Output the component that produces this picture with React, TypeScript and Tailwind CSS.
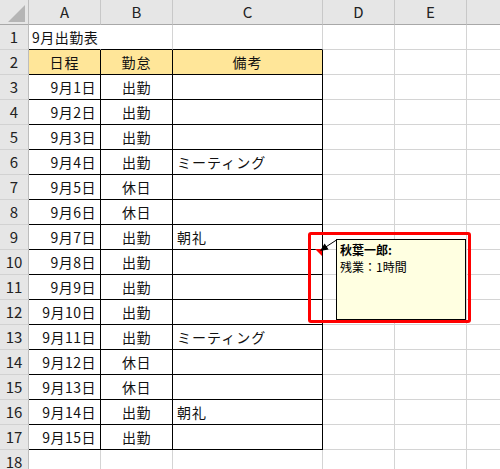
import React from "react";

const font = { fontFamily: '"Noto Sans CJK JP", "Noto Sans", sans-serif' };

type Day = { date: string; status: string; note?: string };

const days: Day[] = [
  { date: "9月1日", status: "出勤" },
  { date: "9月2日", status: "出勤" },
  { date: "9月3日", status: "出勤" },
  { date: "9月4日", status: "出勤", note: "ミーティング" },
  { date: "9月5日", status: "休日" },
  { date: "9月6日", status: "休日" },
  { date: "9月7日", status: "出勤", note: "朝礼" },
  { date: "9月8日", status: "出勤" },
  { date: "9月9日", status: "出勤" },
  { date: "9月10日", status: "出勤" },
  { date: "9月11日", status: "出勤", note: "ミーティング" },
  { date: "9月12日", status: "休日" },
  { date: "9月13日", status: "休日" },
  { date: "9月14日", status: "出勤", note: "朝礼" },
  { date: "9月15日", status: "出勤" },
];

const rowHead =
  "w-[29px] shrink-0 h-full flex items-center justify-center bg-[#e6e6e6] border-r border-b border-r-[#bdbdbd] border-b-[#d2d2d2] text-[15px] text-[#222] pt-[1px]";
const grid = "shrink-0 h-full border-r border-b border-[#d4d4d4]";
const black = "shrink-0 h-full border-r border-b border-black flex items-center text-[14px] text-[#111] pt-[1px]";

function RowNum({ n }: { n: number }) {
  return <div className={rowHead}>{n}</div>;
}

function Rest() {
  return (
    <>
      <div className={`${grid} w-[72px]`} />
      <div className={`${grid} w-[72px]`} />
      <div className="flex-1 h-full border-b border-[#d4d4d4]" />
    </>
  );
}

export default function App() {
  return (
    <div className="relative w-[500px] h-[469px] overflow-hidden bg-white" style={font}>
      {/* column headers */}
      <div className="flex h-[25px]">
        <div className="relative w-[29px] shrink-0 h-full bg-[#e6e6e6] border-r border-b border-r-[#bdbdbd] border-b-[#a8a8a8]">
          <svg className="absolute left-[8px] top-[5px]" width="17" height="17" viewBox="0 0 17 17">
            <polygon points="17,0 17,17 0,17" fill="#b5b5b5" />
          </svg>
        </div>
        {[
          ["A", "w-[72px]"],
          ["B", "w-[72px]"],
          ["C", "w-[150px]"],
          ["D", "w-[72px]"],
          ["E", "w-[72px]"],
        ].map(([l, w]) => (
          <div
            key={l}
            className={`${w} shrink-0 h-full flex items-center justify-center bg-[#e6e6e6] border-r border-b border-r-[#c8c8c8] border-b-[#a8a8a8] text-[15px] text-[#222]`}
          >
            {l}
          </div>
        ))}
        <div className="flex-1 h-full flex items-center pl-[34px] bg-[#e6e6e6] border-b border-b-[#a8a8a8] text-[15px] text-[#222]">
          F
        </div>
      </div>

      {/* row 1 */}
      <div className="flex h-[25px]">
        <RowNum n={1} />
        <div className="w-[72px] shrink-0 h-full border-r border-b border-r-transparent border-b-black flex items-center pl-[3px] text-[14px] text-[#111] whitespace-nowrap tracking-[0.5px] pt-[1px]">
          9月出勤表
        </div>
        <div className="w-[72px] shrink-0 h-full border-r border-b border-r-[#d4d4d4] border-b-black" />
        <div className="w-[150px] shrink-0 h-full border-r border-b border-r-[#d4d4d4] border-b-black" />
        <Rest />
      </div>

      {/* row 2 - header */}
      <div className="flex h-[25px]">
        <RowNum n={2} />
        <div className={`${black} w-[72px] justify-center bg-[#ffe699] tracking-[1px]`}>日程</div>
        <div className={`${black} w-[72px] justify-center bg-[#ffe699] tracking-[1px]`}>勤怠</div>
        <div className={`${black} w-[150px] justify-center bg-[#ffe699] tracking-[1px]`}>備考</div>
        <Rest />
      </div>

      {days.map((d, i) => (
        <div key={d.date} className="flex h-[25px]">
          <RowNum n={i + 3} />
          <div className={`${black} w-[72px] justify-end pr-[4px] tracking-[0.5px]`}>{d.date}</div>
          <div className={`${black} w-[72px] justify-center tracking-[0.5px]`}>{d.status}</div>
          <div className={`${black} w-[150px] pl-[4px] tracking-[1px]`}>{d.note}</div>
          <Rest />
        </div>
      ))}

      {/* row 18 */}
      <div className="flex h-[25px]">
        <RowNum n={18} />
        <div className={`${grid} w-[72px]`} />
        <div className={`${grid} w-[72px]`} />
        <div className={`${grid} w-[150px]`} />
        <Rest />
      </div>

      {/* comment indicator + comment */}
      <svg className="absolute left-[315px] top-[249px]" width="7" height="7" viewBox="0 0 7 7">
        <polygon points="0,0 7,0 7,7" fill="#ff0000" />
      </svg>
      <svg className="absolute left-[314px] top-[236px]" width="24" height="20" viewBox="0 0 24 20">
        <line x1="22.5" y1="4" x2="11" y2="11.5" stroke="#000" strokeWidth="1" />
        <polygon points="6,15 14.6,13.4 10.6,7.6" fill="#000" />
      </svg>
      <div className="absolute left-[336px] top-[239px] w-[130px] h-[81px] border border-black bg-[#ffffe1] px-[3px] pt-[1px] text-[12px] leading-[17px] text-black">
        <div className="font-bold">秋葉一郎:</div>
        <div>残業：1時間</div>
      </div>
      <div className="absolute left-[308px] top-[232px] w-[163px] h-[91px] border-[3px] border-[#ff0000] rounded-[3px]" />
    </div>
  );
}
